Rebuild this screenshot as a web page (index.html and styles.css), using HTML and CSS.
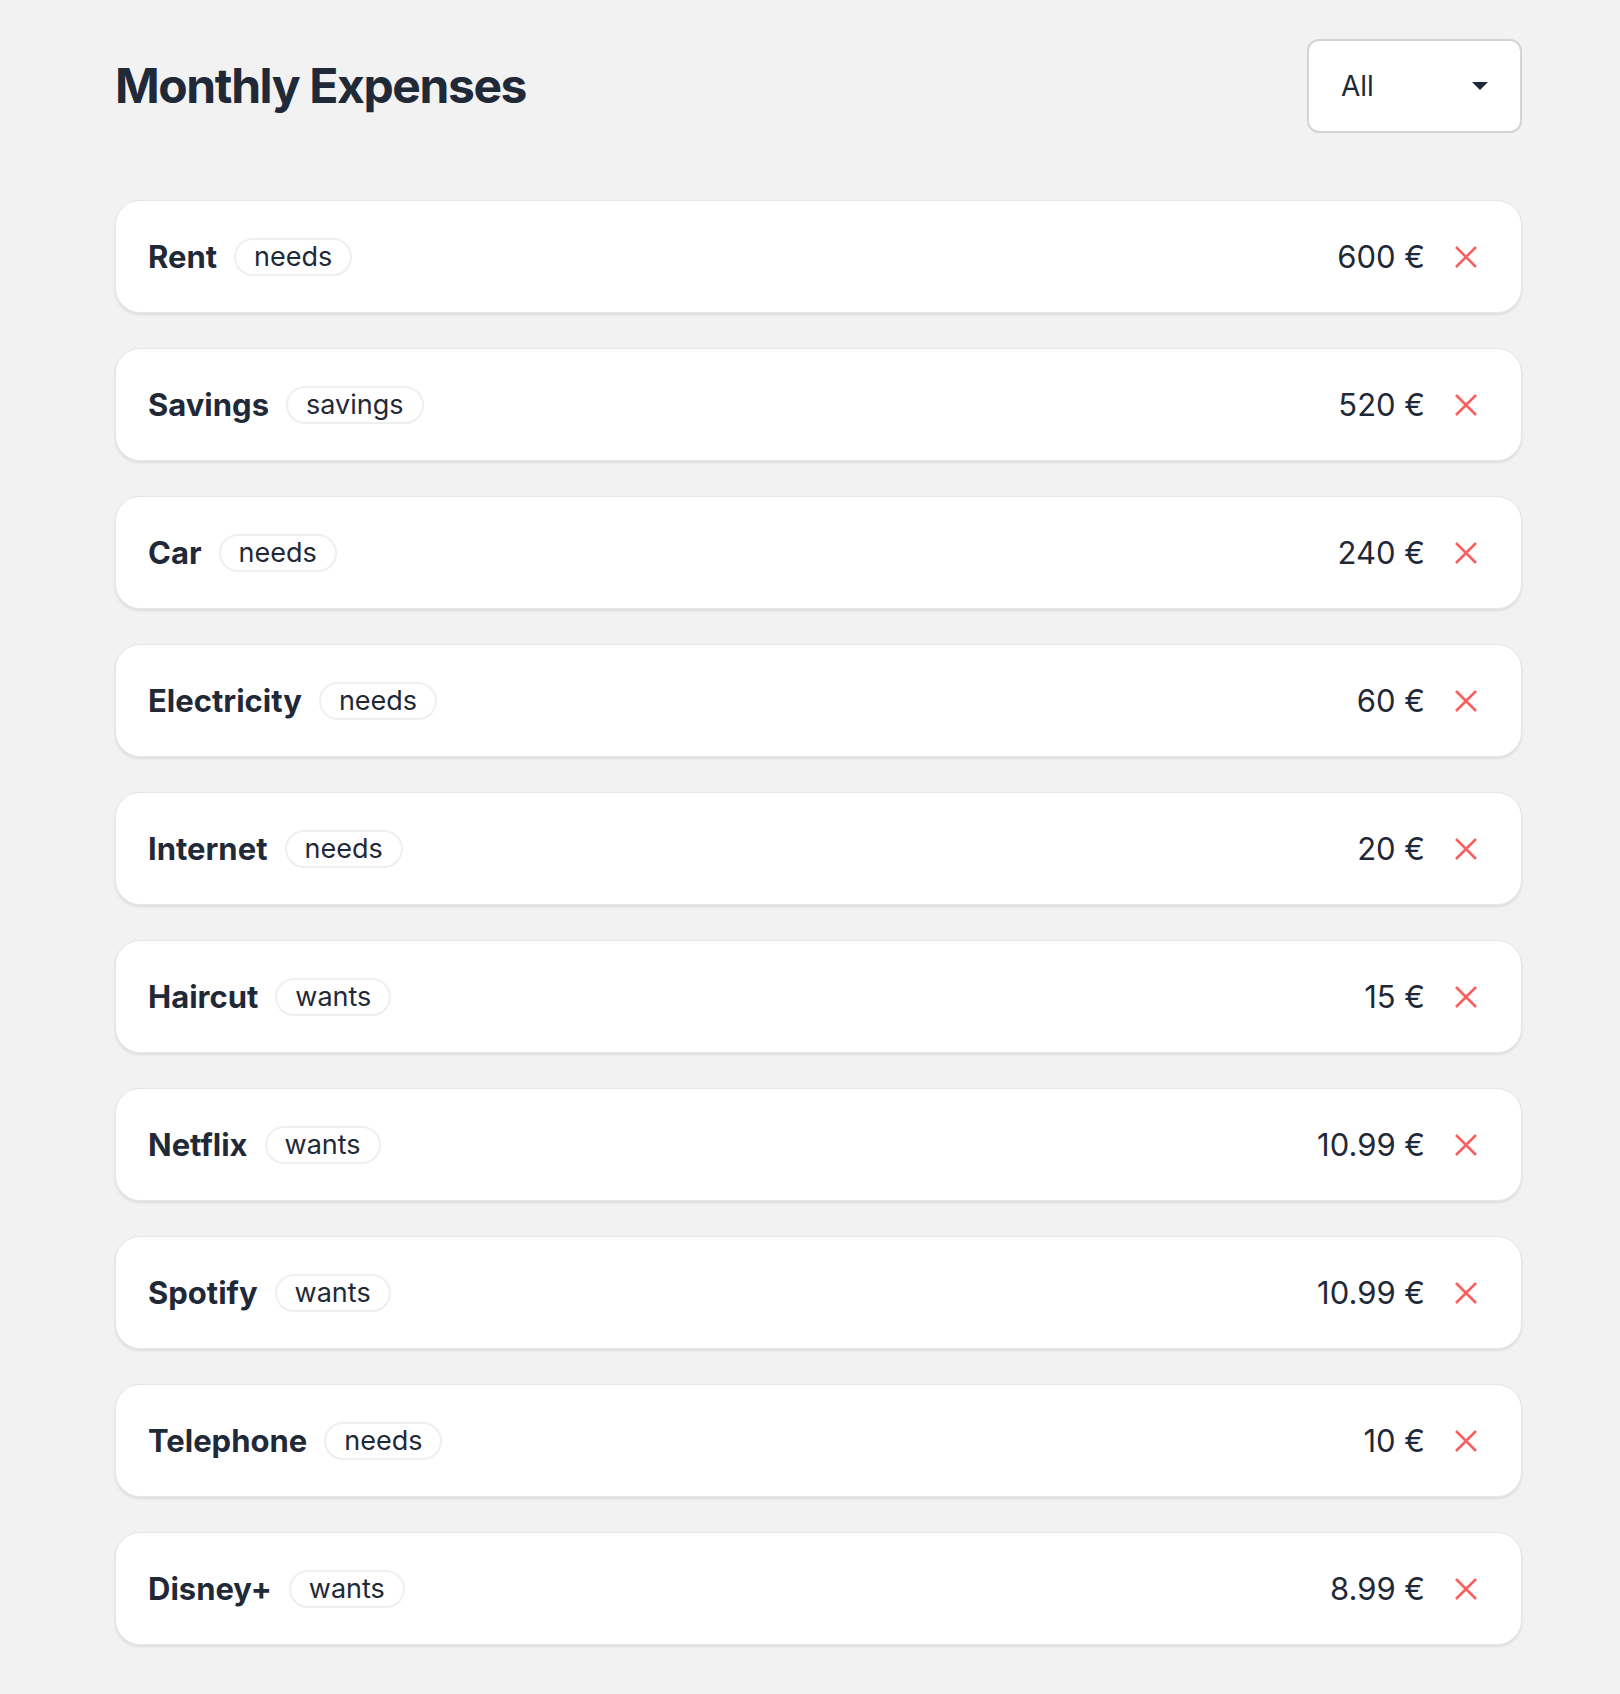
FILE: index.html
```html
<!DOCTYPE html>
<html lang="en">
<head>
<meta charset="utf-8">
<title>Monthly Expenses</title>
<link rel="stylesheet" href="styles.css">
</head>
<body>
<main class="page">
  <header class="header">
    <h1 class="title">Monthly Expenses</h1>
    <div class="select">
      <span class="select-value">All</span>
      <span class="caret"></span>
    </div>
  </header>
  <ul class="list">
    <li class="card"><div class="left"><span class="name">Rent</span><span class="tag">needs</span></div><div class="right"><span class="amount">600 €</span><button class="remove" aria-label="Remove"><svg viewBox="0 0 22 22" width="22" height="22"><path d="M1 1L21 21M21 1L1 21"/></svg></button></div></li>
    <li class="card"><div class="left"><span class="name">Savings</span><span class="tag">savings</span></div><div class="right"><span class="amount">520 €</span><button class="remove" aria-label="Remove"><svg viewBox="0 0 22 22" width="22" height="22"><path d="M1 1L21 21M21 1L1 21"/></svg></button></div></li>
    <li class="card"><div class="left"><span class="name">Car</span><span class="tag">needs</span></div><div class="right"><span class="amount">240 €</span><button class="remove" aria-label="Remove"><svg viewBox="0 0 22 22" width="22" height="22"><path d="M1 1L21 21M21 1L1 21"/></svg></button></div></li>
    <li class="card"><div class="left"><span class="name">Electricity</span><span class="tag">needs</span></div><div class="right"><span class="amount">60 €</span><button class="remove" aria-label="Remove"><svg viewBox="0 0 22 22" width="22" height="22"><path d="M1 1L21 21M21 1L1 21"/></svg></button></div></li>
    <li class="card"><div class="left"><span class="name">Internet</span><span class="tag">needs</span></div><div class="right"><span class="amount">20 €</span><button class="remove" aria-label="Remove"><svg viewBox="0 0 22 22" width="22" height="22"><path d="M1 1L21 21M21 1L1 21"/></svg></button></div></li>
    <li class="card"><div class="left"><span class="name">Haircut</span><span class="tag">wants</span></div><div class="right"><span class="amount">15 €</span><button class="remove" aria-label="Remove"><svg viewBox="0 0 22 22" width="22" height="22"><path d="M1 1L21 21M21 1L1 21"/></svg></button></div></li>
    <li class="card"><div class="left"><span class="name">Netflix</span><span class="tag">wants</span></div><div class="right"><span class="amount">10.99 €</span><button class="remove" aria-label="Remove"><svg viewBox="0 0 22 22" width="22" height="22"><path d="M1 1L21 21M21 1L1 21"/></svg></button></div></li>
    <li class="card"><div class="left"><span class="name">Spotify</span><span class="tag">wants</span></div><div class="right"><span class="amount">10.99 €</span><button class="remove" aria-label="Remove"><svg viewBox="0 0 22 22" width="22" height="22"><path d="M1 1L21 21M21 1L1 21"/></svg></button></div></li>
    <li class="card"><div class="left"><span class="name">Telephone</span><span class="tag">needs</span></div><div class="right"><span class="amount">10 €</span><button class="remove" aria-label="Remove"><svg viewBox="0 0 22 22" width="22" height="22"><path d="M1 1L21 21M21 1L1 21"/></svg></button></div></li>
    <li class="card"><div class="left"><span class="name">Disney+</span><span class="tag">wants</span></div><div class="right"><span class="amount">8.99 €</span><button class="remove" aria-label="Remove"><svg viewBox="0 0 22 22" width="22" height="22"><path d="M1 1L21 21M21 1L1 21"/></svg></button></div></li>
  </ul>
</main>
</body>
</html>
```

FILE: styles.css
```css
* { box-sizing: border-box; }
html, body { margin: 0; padding: 0; }
body {
  background: #f2f2f2;
  font-family: Inter, "Noto Sans", "Liberation Sans", sans-serif;
  color: #1f2937;
}
.page {
  padding: 39px 98px 40px 115px;
}
.header {
  display: flex;
  align-items: center;
  justify-content: space-between;
  height: 94px;
}
.title {
  margin: 0;
  font-size: 48px;
  font-weight: 700;
  line-height: 1;
  letter-spacing: -1.4px;
}
.select {
  width: 215px;
  height: 94px;
  background: #fff;
  border: 2px solid #d4d4d8;
  border-radius: 12px;
  display: flex;
  align-items: center;
  justify-content: space-between;
  padding: 0 32px 0 32px;
}
.select-value {
  font-size: 28px;
}
.caret {
  width: 0;
  height: 0;
  border-left: 8px solid transparent;
  border-right: 8px solid transparent;
  border-top: 8px solid #1f2937;
}
.list {
  list-style: none;
  margin: 67px 0 0;
  padding: 0;
  display: flex;
  flex-direction: column;
  gap: 35px;
}
.card {
  height: 113px;
  background: #fff;
  border: 1px solid #e6e6ea;
  border-radius: 25px;
  box-shadow: 0 2px 3px rgba(0, 0, 0, 0.09);
  display: flex;
  align-items: center;
  justify-content: space-between;
  padding: 0 44px 0 32px;
}
.left, .right {
  display: flex;
  align-items: center;
}
.name {
  font-size: 31px;
  font-weight: 700;
}
.tag {
  margin-left: 17px;
  height: 38px;
  display: inline-flex;
  align-items: center;
  padding: 0 18px;
  border: 2px solid #efefef;
  border-radius: 999px;
  font-size: 27px;
}
.amount {
  font-size: 31px;
}
.remove {
  margin-left: 30px;
  width: 22px;
  height: 22px;
  padding: 0;
  border: 0;
  background: none;
  display: flex;
}
.remove svg {
  stroke: #fa5f5f;
  stroke-width: 2.6;
  fill: none;
}
```
